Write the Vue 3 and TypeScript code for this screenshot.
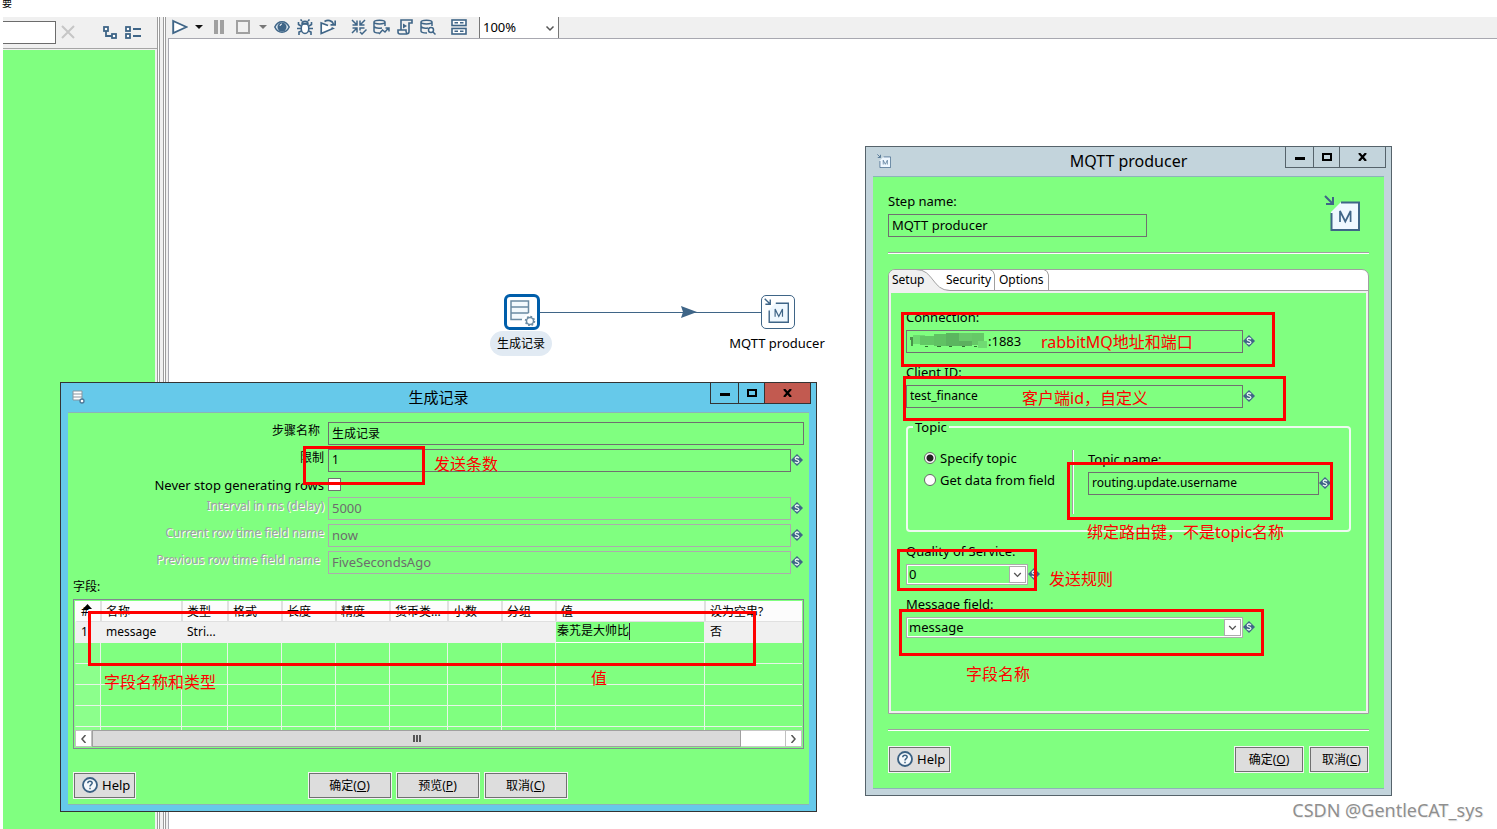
<script setup lang="ts">
import { ref } from 'vue'

interface Mark { x: number; y: number; w: number; h: number }
interface Note { x: number; y: number; text: string }
interface Field { id: string; label: string; value: string; disabled?: boolean; variable?: boolean; inset?: boolean }

const marks: Mark[] = [
  { x: 303, y: 446, w: 122, h: 39 },
  { x: 88, y: 611, w: 668, h: 55 },
  { x: 901, y: 312, w: 374, h: 55 },
  { x: 903, y: 376, w: 383, h: 45 },
  { x: 1067, y: 462, w: 266, h: 58 },
  { x: 897, y: 549, w: 140, h: 42 },
  { x: 899, y: 609, w: 365, h: 47 },
]

const notes: Note[] = [
  { x: 434, y: 454, text: '发送条数' },
  { x: 104, y: 672, text: '字段名称和类型' },
  { x: 591, y: 668, text: '值' },
  { x: 1041, y: 332, text: 'rabbitMQ地址和端口' },
  { x: 1022, y: 388, text: '客户端id，自定义' },
  { x: 1087, y: 522, text: '绑定路由键，不是topic名称' },
  { x: 1049, y: 569, text: '发送规则' },
  { x: 966, y: 664, text: '字段名称' },
]

const topFields: Field[] = [
  { id: 'step', label: '步骤名称', value: '生成记录', inset: true },
  { id: 'limit', label: '限制', value: '1', variable: true },
]
const timeFields: Field[] = [
  { id: 'interval', label: 'Interval in ms (delay)', value: '5000', disabled: true, variable: true },
  { id: 'now', label: 'Current row time field name', value: 'now', disabled: true, variable: true },
  { id: 'prev', label: 'Previous row time field name', value: 'FiveSecondsAgo', disabled: true, variable: true, inset: true },
]

const columns = ['#', '名称', '类型', '格式', '长度', '精度', '货币类...', '小数', '分组', '值', '设为空串?']
const neverStop = ref(false)
const topicMode = ref('topic')
const cellValue = ref('秦艽是大帅比')
</script>

<template>
  <div class="page">
    <svg class="defs" width="0" height="0" aria-hidden="true">
      <symbol id="var" viewBox="0 0 12 12">
        <path d="M6 0L12 6L6 12L0 6Z" fill="#3f6587" />
        <path d="M8 4.200C7.400 3 4.200 2.800 4.200 4.500C4.200 6.200 7.900 5.700 7.900 7.400C7.900 9 4.500 9 3.900 7.800" fill="none" stroke="#dff0ea" stroke-width="1.300" />
        <path d="M6 2V3.500M6 8.500V10" stroke="#dff0ea" />
      </symbol>
      <symbol id="help" viewBox="0 0 16 16">
        <circle cx="8" cy="8" r="7" fill="#f4f8fb" stroke="#3b6183" stroke-width="1.800" />
        <path d="M5.800 6.200C5.800 3.500 10.200 3.500 10.200 6.100C10.200 7.600 8 7.700 8 9.400M8 10.700V12.200" fill="none" stroke="#3b6183" stroke-width="1.500" />
      </symbol>
      <symbol id="chevron" viewBox="0 0 16 16">
        <path d="M4.500 6.500L8 10L11.500 6.500" fill="none" stroke="#555" stroke-width="1.500" />
      </symbol>
      <symbol id="mqtt" viewBox="0 0 36 36">
        <path d="M17 7H35V35H7V17Z" fill="#eff8ff" />
        <path d="M17 7.500H35V35H7.500V18" fill="none" stroke="#3f6587" stroke-width="2" />
        <path d="M1 1L8 8M9 2V9H2" fill="none" stroke="#3f6587" stroke-width="2" />
        <path d="M16 27V16L21.300 26.500L26.600 16V27" fill="none" stroke="#3f6587" stroke-width="1.700" />
      </symbol>
    </svg>

    <div class="top-strip"><span>要</span></div>

    <div class="workspace">
      <aside class="explorer">
        <div class="explorer-bar">
          <input class="search" type="text" aria-label="Search" />
          <button class="tool clear" aria-label="Clear">
            <svg width="14" height="14" viewBox="0 0 14 14"><path d="M1 1L13 13M13 1L1 13" stroke="#c6c6c6" stroke-width="2" /></svg>
          </button>
          <button class="tool" aria-label="Expand all">
            <svg width="14" height="13" viewBox="0 0 14 13" fill="#fff" stroke="#3f6587" stroke-width="1.800"><rect x="1" y="1" width="4" height="4" /><rect x="9" y="8" width="4" height="4" /><path d="M3 5V10H9" fill="none" /></svg>
          </button>
          <button class="tool collapse" aria-label="Collapse all">
            <svg width="17" height="13" viewBox="0 0 17 13" fill="#fff" stroke="#3f6587" stroke-width="1.800"><rect x="1" y="1" width="4" height="4" /><rect x="1" y="8" width="4" height="4" /><path d="M8 3H16M8 10H16" /></svg>
          </button>
        </div>
        <div class="tree"></div>
      </aside>
      <div class="sash"></div>

      <main class="editor">
        <div class="toolbar">
          <button class="tool w23" aria-label="Run">
            <svg width="16" height="16" viewBox="0 0 16 16"><path d="M1.200 2L14.500 8L1.200 14Z" fill="#fff" stroke="#3f6587" stroke-width="1.900" /></svg>
          </button>
          <button class="tool w16" aria-label="Run options"><svg width="8" height="4"><path d="M0 0H8L4 4Z" fill="#111" /></svg></button>
          <button class="tool w24" aria-label="Pause"><svg width="10" height="14"><path d="M0 0H4V14H0ZM6 0H10V14H6Z" fill="#a0a0a0" /></svg></button>
          <button class="tool w24" aria-label="Stop"><svg width="14" height="14"><rect x="1" y="1" width="12" height="12" fill="none" stroke="#a0a0a0" stroke-width="2" /></svg></button>
          <button class="tool w15" aria-label="Stop options"><svg width="8" height="4"><path d="M0 0H8L4 4Z" fill="#777" /></svg></button>
          <button class="tool w23" aria-label="Preview">
            <svg width="16" height="14" viewBox="0 0 16 14"><path d="M.8 7C4 0 12 0 15.200 7C12 14 4 14 .8 7Z" fill="#dce8f0" stroke="#3f6587" stroke-width="1.500" /><circle cx="8" cy="7" r="4.500" fill="#3f6587" /><path d="M6 6A2 2 0 0 1 8 4" fill="none" stroke="#fff" /></svg>
          </button>
          <button class="tool w23" aria-label="Debug">
            <svg width="16" height="16" viewBox="0 0 16 16" fill="none" stroke="#3f6587" stroke-width="1.600"><ellipse cx="8" cy="9.500" rx="3.800" ry="5" fill="#fff" /><path d="M5 5C5 1.500 11 1.500 11 5ZM5 2L3.500 .5M11 2L12.500 .5M4 7L1.500 5.500V3M12 7L14.500 5.500V3M4 9.500H0M12 9.500H16M4.500 12L2 13V16M11.500 12L14 13V16" /></svg>
          </button>
          <button class="tool w23" aria-label="Replay">
            <svg width="16" height="16" viewBox="0 0 16 16" fill="none" stroke="#3f6587" stroke-width="1.700"><path d="M8 6.500L1.200 4V14.500L13 9.500L11.500 8.700" fill="#fff" /><path d="M4.500 2.500C8 .5 12 1.500 13.500 5M15.200 1.500V5.800H10.500" /></svg>
          </button>
          <button class="tool w23 gap" aria-label="Verify">
            <svg width="16" height="16" viewBox="0 0 16 16" fill="none" stroke="#3f6587" stroke-width="1.500"><path d="M1 1L5.500 5.500M6 1.500V6H1.500M14 1L9.500 5.500M9 1.500V6H13.500M1 14L5.500 9.500M6 13.500V9H1.500M13.500 9H9V11.500M9 13L11 15L15.500 10.500" /></svg>
          </button>
          <button class="tool w23" aria-label="Impact">
            <svg width="17" height="16" viewBox="0 0 17 16" fill="none" stroke="#3f6587" stroke-width="1.500"><path d="M1 3C1 .5 12 .5 12 3V7M1 3C1 5.500 12 5.500 12 3M1 3V12C1 13.500 4 14 6 14M1 7.500C2 9 6 9.500 9 9M6 15L9.500 11L12 13L15.500 9M12.500 9H16V12.500" /></svg>
          </button>
          <button class="tool w23" aria-label="SQL">
            <svg width="16" height="16" viewBox="0 0 16 16" fill="none" stroke="#3f6587" stroke-width="1.600"><path d="M4 11V1H15V4H12V12.500C12 15.500 9 15 9 12V11H1V13Q1 15 3 15H10.500" /><path d="M6 4.500L10 7L6 9.500Z" fill="#3f6587" stroke="none" /></svg>
          </button>
          <button class="tool w23" aria-label="Explore database">
            <svg width="16" height="16" viewBox="0 0 16 16" fill="none" stroke="#3f6587" stroke-width="1.500"><path d="M1 3C1 .5 12 .5 12 3V7M1 3C1 5.500 12 5.500 12 3M1 3V12C1 13.500 4 14 7 14M1 7.500C2 9 5 9.500 8 9" /><circle cx="11" cy="11" r="2.500" fill="#fff" /><path d="M13 13L15.500 15.500" /></svg>
          </button>
          <button class="tool w23 gap" aria-label="Show results">
            <svg width="16" height="16" viewBox="0 0 16 16" fill="#fff" stroke="#3f6587" stroke-width="1.600"><rect x="1" y="1" width="14" height="5.500" /><rect x="1" y="9.500" width="14" height="5.500" /><path d="M3.500 3.700H7M9 3.700H12.500M3.500 12.200H7M9 12.200H12.500" /></svg>
          </button>
          <div class="zoom">
            <select aria-label="Zoom"><option>100%</option></select>
            <svg width="16" height="16"><use href="#chevron" /></svg>
          </div>
        </div>

        <div class="canvas">
          <svg class="hop" width="222" height="14" viewBox="0 0 222 14"><path d="M0 7.500H222" stroke="#3f6587" /><path d="M141 1L157 7L141 13L143 7Z" fill="#3f6587" /></svg>
          <div class="node rows-node">
            <svg width="28" height="28" viewBox="0 0 28 28" fill="none" stroke="#6b8ba3" stroke-width="1.500"><path d="M20.500 15V3H3V21.500H14" fill="#f3f9fd" /><path d="M3 9H20.500M3 15H20.500" /><circle cx="22" cy="23" r="3.500" fill="#fff" /><circle cx="22" cy="23" r="4.500" stroke-dasharray="1.800 1.700" /></svg>
          </div>
          <span class="caption selected">生成记录</span>
          <div class="node mqtt-node"><svg width="25" height="25"><use href="#mqtt" /></svg></div>
          <span class="caption">MQTT producer</span>
        </div>
      </main>
    </div>

    <section class="window rows-window" aria-label="生成记录">
      <header class="titlebar">
        <svg class="sysicon" width="14" height="14" viewBox="0 0 14 14"><path d="M1 1H10V10H1Z" fill="#fff" stroke="#8795a0" /><path d="M1 4H10M1 7H10" stroke="#8795a0" /><circle cx="10" cy="11" r="2" fill="#fff" stroke="#4c7696" stroke-width="1.300" /></svg>
        <h2 class="zh-title">生成记录</h2>
        <div class="winbtns">
          <button class="min" aria-label="Minimize"><svg width="10" height="3"><path d="M0 0H10V3H0Z" /></svg></button>
          <button class="max" aria-label="Maximize"><svg width="10" height="8"><path d="M1 1H9V7H1Z" fill="none" stroke="#000" stroke-width="2" /></svg></button>
          <button class="close" aria-label="Close"><svg width="9" height="8"><path d="M1 0L8 8M8 0L1 8" stroke="#000" stroke-width="2.200" /></svg></button>
        </div>
      </header>
      <form class="winbody rows-body" @submit.prevent>
        <div class="form-rows">
          <div v-for="f in topFields" :key="f.id" class="form-row">
            <label :for="f.id" class="zh" :class="{ inset: f.inset }">{{ f.label }}</label>
            <input :id="f.id" class="box zh" type="text" :value="f.value" />
            <svg v-if="f.variable" class="var"><use href="#var" /></svg>
          </div>
          <div class="form-row check-row">
            <label for="never">Never stop generating rows</label>
            <input id="never" v-model="neverStop" type="checkbox" />
          </div>
          <div v-for="f in timeFields" :key="f.id" class="form-row">
            <label :for="f.id" class="off" :class="{ inset: f.inset }">{{ f.label }}</label>
            <input :id="f.id" class="box" type="text" :value="f.value" disabled />
            <svg class="var"><use href="#var" /></svg>
          </div>
        </div>
        <p class="grid-label zh">字段:</p>
        <div class="grid-frame">
          <div class="grid-view">
            <table>
              <colgroup><col v-for="(c, i) in columns" :key="c" :class="'col' + i" /></colgroup>
              <thead>
                <tr>
                  <th v-for="(c, i) in columns" :key="c">{{ c }}<svg v-if="i === 0" class="sort" width="9" height="5"><path d="M0 5L4.500 0L9 5Z" /></svg></th>
                </tr>
              </thead>
              <tbody>
                <tr class="current">
                  <td>1</td><td>message</td><td>Stri...</td>
                  <td v-for="n in 6" :key="n"></td>
                  <td class="editing"><div><input v-model="cellValue" type="text" aria-label="值" /><i></i></div></td>
                  <td>否</td>
                </tr>
                <tr v-for="r in 5" :key="r"><td v-for="c in 11" :key="c"></td></tr>
              </tbody>
            </table>
          </div>
          <div class="scroll">
            <button aria-label="Scroll left"><svg width="7" height="8"><path d="M5.500 0L2 4L5.500 8" fill="none" stroke="#555" stroke-width="1.500" /></svg></button>
            <div class="thumb"><svg width="8" height="7"><path d="M0 0H2V7H0ZM3 0H5V7H3ZM6 0H8V7H6Z" fill="#555" /></svg></div>
            <div class="track"></div>
            <button aria-label="Scroll right"><svg width="7" height="8"><path d="M1.500 0L5 4L1.500 8" fill="none" stroke="#555" stroke-width="1.500" /></svg></button>
          </div>
        </div>
        <footer class="rows-actions">
          <button class="btn help" type="button"><svg width="16" height="16"><use href="#help" /></svg>Help</button>
          <div class="middle">
            <button class="btn zh" type="submit">确定(<u>O</u>)</button>
            <button class="btn zh" type="button">预览(<u>P</u>)</button>
            <button class="btn zh" type="button">取消(<u>C</u>)</button>
          </div>
        </footer>
      </form>
    </section>

    <section class="window mqtt-window" aria-label="MQTT producer">
      <header class="titlebar">
        <svg class="sysicon" width="14" height="14" viewBox="0 0 36 36"><use href="#mqtt" /></svg>
        <h2>MQTT producer</h2>
        <div class="winbtns">
          <button class="min" aria-label="Minimize"><svg width="10" height="3"><path d="M0 0H10V3H0Z" /></svg></button>
          <button class="max" aria-label="Maximize"><svg width="10" height="8"><path d="M1 1H9V7H1Z" fill="none" stroke="#000" stroke-width="2" /></svg></button>
          <button class="close" aria-label="Close"><svg width="9" height="8"><path d="M1 0L8 8M8 0L1 8" stroke="#000" stroke-width="2.200" /></svg></button>
        </div>
      </header>
      <form class="winbody mqtt-body" @submit.prevent>
        <div class="step-head">
          <div class="stack step">
            <label for="mstep">Step name:</label>
            <input id="mstep" class="box" type="text" value="MQTT producer" />
          </div>
          <svg class="step-icon" width="36" height="36"><use href="#mqtt" /></svg>
        </div>
        <hr />
        <div class="tabs">
          <div class="tabbar" role="tablist">
            <svg class="tabshape" width="162" height="22" viewBox="0 0 162 22" fill="none" stroke="#a0a0a0">
              <path d="M0 22V5Q1 .5 6 .5H28C46 .5 44 21.500 62 21.500V22Z" fill="#f0f0f0" stroke="none" />
              <path d="M28 .5C46 .5 44 21.500 62 21.500" />
              <path d="M101 0Q106.500 2 106.500 6V22M155 0Q160.500 2 160.500 6V22" />
            </svg>
            <button class="tab first" type="button" role="tab">Setup</button>
            <button class="tab" type="button" role="tab">Security</button>
            <button class="tab" type="button" role="tab">Options</button>
          </div>
          <div class="tabpage">
            <div class="stack">
              <label for="conn">Connection:</label>
              <div class="var-field">
                <div class="conn">
                  <input id="conn" class="box" type="text" value=":1883" />
                  <svg class="mosaic" width="82" height="18" viewBox="0 0 82 18">
                    <path d="M2 5H6V7H5V14H3V8H2ZM9 4H14V10H12V7H9Z" fill="#49934a" />
                    <rect x="5" y="3" width="12" height="9" fill="#6ddb70" />
                    <rect x="12" y="4" width="14" height="9" fill="#62c865" />
                    <rect x="26" y="2" width="12" height="12" fill="#60c263" />
                    <rect x="38" y="1" width="13" height="13" fill="#5bb55f" />
                    <rect x="51" y="1" width="13" height="8" fill="#69cb6a" />
                    <rect x="51" y="9" width="13" height="5" fill="#5cb15f" />
                    <rect x="64" y="1" width="12" height="12" fill="#66c867" />
                    <rect x="70" y="9" width="9" height="7" fill="#70da72" />
                    <path d="M17 14H20V15H17ZM29 14H33V15H29ZM41 14H44V15H41ZM54 14H57V15H54ZM66 14H69V15H66Z" fill="#307032" />
                  </svg>
                </div>
                <svg class="var"><use href="#var" /></svg>
              </div>
            </div>
            <div class="stack">
              <label for="client">Client ID:</label>
              <div class="var-field">
                <input id="client" class="box small" type="text" value="test_finance" />
                <svg class="var"><use href="#var" /></svg>
              </div>
            </div>
            <fieldset>
              <legend>Topic</legend>
              <div class="topic">
                <div class="radios">
                  <label><input v-model="topicMode" type="radio" name="mode" value="topic" />Specify topic</label>
                  <label><input v-model="topicMode" type="radio" name="mode" value="field" />Get data from field</label>
                </div>
                <div class="divider"></div>
                <div class="stack">
                  <label for="topic">Topic name:</label>
                  <div class="var-field">
                    <input id="topic" class="box small" type="text" value="routing.update.username" />
                    <svg class="var"><use href="#var" /></svg>
                  </div>
                </div>
              </div>
            </fieldset>
            <div class="stack">
              <label for="qos">Quality of Service:</label>
              <div class="var-field short">
                <div class="combo"><select id="qos"><option>0</option></select><span><svg width="16" height="16"><use href="#chevron" /></svg></span></div>
                <svg class="var"><use href="#var" /></svg>
              </div>
            </div>
            <div class="stack">
              <label for="msg">Message field:</label>
              <div class="var-field">
                <div class="combo"><select id="msg"><option>message</option></select><span><svg width="16" height="16"><use href="#chevron" /></svg></span></div>
                <svg class="var"><use href="#var" /></svg>
              </div>
            </div>
          </div>
        </div>
        <hr />
        <footer class="mqtt-actions">
          <button class="btn help" type="button"><svg width="16" height="16"><use href="#help" /></svg>Help</button>
          <button class="btn zh ok" type="submit">确定(<u>O</u>)</button>
          <button class="btn zh cancel" type="button">取消(<u>C</u>)</button>
        </footer>
      </form>
    </section>

    <div v-for="m in marks" :key="m.x + '-' + m.y" class="mark" :style="{ left: m.x + 'px', top: m.y + 'px', width: m.w + 'px', height: m.h + 'px' }"></div>
    <span v-for="n in notes" :key="n.x" class="note" :style="{ left: n.x + 'px', top: n.y + 'px' }">{{ n.text }}</span>
    <span class="watermark">CSDN @GentleCAT_sys</span>
  </div>
</template>

<style>
html, body { margin: 0; overflow: hidden; }
</style>

<style scoped>
.page { position: relative; display: flex; flex-direction: column; min-height: 100vh; background: #fff; overflow: hidden; color: #000; font: 13px/18px "Noto Sans", "Noto Sans CJK SC", sans-serif; }
.page * { box-sizing: border-box; }
.defs { position: absolute; }
svg { display: block; flex: none; }
button, input, select { font: inherit; color: inherit; margin: 0; padding: 0; border: 0; border-radius: 0; background: transparent; appearance: none; outline: 0; }
.zh, .small { font-size: 12px; }

.top-strip { height: 17px; padding-left: 2px; font-size: 10px; line-height: 6px; overflow: hidden; }
.top-strip span { display: block; width: 10px; }
.workspace { flex: 1; display: flex; }
.explorer { width: 157px; display: flex; flex-direction: column; padding-left: 3px; background: linear-gradient(90deg, #fff 3px, #f0f0f0 3px); }
.explorer-bar { height: 32px; display: flex; align-items: center; padding-bottom: 1px; border-bottom: 1px solid #a5a5a5; }
.search { width: 53px; height: 23px; background: #fff; border: 1px solid #6c6c6c; border-left: 0; }
.tool { display: flex; align-items: center; justify-content: center; height: 100%; }
.clear { width: 23px; margin-right: 24px; }
.collapse { margin-left: 8px; }
.tree { flex: 1; margin: 1px 2px 0 0; background: #80ff80; }
.sash { width: 11px; background: linear-gradient(90deg, #9c9c9c 1px, #fff 1px 2px, #9c9c9c 2px 3px, #f0f0f0 3px 6px, #9c9c9c 6px 7px, #fff 7px 8px, #9c9c9c 8px 9px, #f0f0f0 9px); }
.editor { flex: 1; display: flex; flex-direction: column; }
.toolbar { height: 21px; display: flex; align-items: center; background: #f0f0f0; }
.toolbar .tool { padding-bottom: 2px; }
.w23 { width: 23px; }
.w24 { width: 24px; }
.w16 { width: 16px; }
.w15 { width: 15px; }
.gap { margin-left: 8px; }
.zoom { display: grid; width: 80px; height: 21px; margin-left: 9px; background: #fff; border: solid #777; border-width: 0 1px; align-items: center; }
.zoom > * { grid-area: 1 / 1; }
.zoom select { padding: 0 0 2px 3px; }
.zoom svg { justify-self: end; pointer-events: none; }
.canvas { position: relative; flex: 1; background: #fff; border: solid #a8a8b0; border-width: 1px 0 0 1px; }
.hop { position: absolute; left: 371px; top: 266px; }
.node { position: absolute; display: flex; background: #fff; }
.rows-node { left: 335px; top: 255px; width: 36px; height: 36px; border: 3px solid #005eaa; border-radius: 6px; align-items: center; justify-content: center; }
.mqtt-node { left: 592px; top: 256px; width: 34px; height: 34px; padding: 2px; border: 1px solid #3f6587; border-radius: 5px; }
.caption { position: absolute; left: 608px; top: 292px; line-height: 25px; white-space: nowrap; transform: translateX(-50%); }
.caption.selected { left: 352px; padding: 0 7px; border-radius: 13px; background: #e1eaf3; font-size: 12px; }

.window { position: absolute; border: 1px solid #333; }
.rows-window { left: 60px; top: 382px; width: 757px; background: #66c9ea; }
.mqtt-window { left: 865px; top: 146px; width: 527px; background: #c3d4dc; border-color: #56636b; }
.titlebar { display: grid; grid-template-columns: 1fr auto 1fr; height: 29px; padding-bottom: 1px; align-items: center; }
.titlebar h2 { margin: 0; font-size: 16px; font-weight: 400; line-height: 28px; }
.titlebar .zh-title { font-size: 15px; }
.sysicon { margin-left: 11px; }
.winbtns { display: flex; justify-self: end; align-self: start; margin: -1px 5px 0 0; }
.winbtns button { display: flex; align-items: center; justify-content: center; height: 22px; border: 1px solid #333; }
.winbtns button + button { margin-left: -1px; }
.mqtt-window .winbtns button { border-color: #56636b; }
.winbtns .min { width: 29px; padding-top: 3px; }
.max { width: 27px; }
.close { width: 47px; }
.rows-window .close { background: #c25a50; }
.winbody { margin: 0 7px 6px; border: solid #8cb4b8; border-width: 1px 0; background: #80ff80; }

.box { flex: 1; min-width: 0; width: 100%; height: 23px; padding: 0 3px 2px; border: 1px solid #707070; }
.box:disabled { color: #6d6d6d; border-color: #acacac; }
.var { width: 12px; height: 12px; margin-bottom: 2px; }

.rows-body { padding: 9px 5px 5px; }
.form-rows { display: flex; flex-direction: column; gap: 4px; }
.form-row { display: flex; align-items: center; }
.form-row label { width: 255px; align-self: flex-start; padding-right: 4px; text-align: right; white-space: nowrap; }
.form-row .inset { padding-right: 8px; }
.form-row .off { color: #a0a0a0; font-size: 12px; text-shadow: 1px 1px 0 #fff; }
.form-row .var { margin-right: 1px; }
.check-row { height: 17px; }
.check-row input { width: 13px; height: 13px; background: #fff; border: 1px solid #707070; }
.check-row input:checked { box-shadow: inset 0 0 0 3px #fff; background: #222; }
.grid-label { margin: 4px 0 3px; }
.grid-frame { border: 1px solid #828790; padding: 1px; }
.grid-view { height: 129px; overflow: hidden; }
table { width: 100%; table-layout: fixed; border-collapse: separate; border-spacing: 0; font-size: 12px; }
.col0 { width: 25px; }
.col1 { width: 81px; }
.col2 { width: 46px; }
.col3, .col4, .col5, .col7, .col8 { width: 54px; }
.col6 { width: 58px; }
.col9 { width: 149px; }
th { position: relative; height: 21px; padding: 2px 0 0 4px; background: #fcfcfc; border-left: 2px solid #e0e0e0; border-bottom: 1px solid #e0e0e0; font-weight: 400; line-height: 18px; text-align: left; white-space: nowrap; }
th:first-child { border-left-color: #fcfcfc; }
.sort { position: absolute; left: 6px; top: 3px; }
td { height: 21px; padding: 0 0 0 5px; border: solid #e8f5e8; border-width: 0 0 1px 1px; line-height: 20px; white-space: nowrap; }
td:first-child { background: #8cff8c; border-left-color: #8cff8c; }
.current td { background: #f0f0f0; border-color: #f0f0f0; }
.current .editing { background: #80ff80; padding: 0; border-bottom-color: #fff; }
.editing div { display: flex; align-items: center; height: 20px; padding: 0 0 2px 1px; }
.editing input { width: 72px; height: 18px; font-size: 12px; }
.editing i { width: 1px; height: 17px; background: #402040; }
.scroll { display: flex; height: 17px; background: #fff; }
.scroll button { display: flex; align-items: center; justify-content: center; width: 17px; background: #fff; border: 1px solid #c0c0c0; }
.thumb { flex: 649; display: flex; align-items: center; justify-content: center; background: #dadada; border: 1px solid #a0a0a0; }
.track { flex: 44; border: solid #c8c8c8; border-width: 1px 0; }
.btn { height: 27px; background: #ddd; border: 1px solid #f4f4f4; box-shadow: inset 0 0 0 1px #707070; text-align: center; white-space: nowrap; }
.btn.help { display: flex; align-items: center; gap: 4px; width: 63px; padding: 0 0 1px 8px; }
.rows-actions { display: grid; grid-template-columns: 1fr auto 1fr; margin-top: 23px; padding-right: 2px; }
.middle { display: flex; gap: 4px; }
.middle .btn { width: 84px; }

.mqtt-body { padding: 15px; }
.step-head { display: flex; justify-content: space-between; }
.step-icon { margin: 3px 9px 0 0; }
.stack { display: flex; flex-direction: column; gap: 4px; }
.step { width: 259px; }
.step .box { flex: none; }
hr { height: 2px; margin: 15px 0; border: 0; border-top: 1px solid #a0a0a0; background: #fff; }
.tabs { border: 1px solid #a0a0a0; border-radius: 7px 7px 0 0; overflow: hidden; background: #fff; }
.tabbar { position: relative; display: flex; height: 21px; border-bottom: 1px solid #a0a0a0; }
.tabshape { position: absolute; left: -1px; top: -1px; }
.tab { position: relative; width: 53px; padding-left: 4px; font-size: 12px; text-align: left; }
.tab.first { padding-left: 3px; }
.tabpage { display: flex; flex-direction: column; gap: 10px; padding: 15px 15px 73px; border: 2px solid #f0f0f0; background: #80ff80; }
.var-field { display: flex; align-items: center; width: 349px; max-width: 100%; }
.var-field.short { width: 134px; }
.conn { position: relative; display: flex; flex: 1; }
.conn .box { padding-left: 81px; }
.mosaic { position: absolute; left: 2px; top: 2px; }
fieldset { min-width: 0; margin: 0; padding: 0 18px 16px 15px; border: 2px solid #eefaf0; border-radius: 4px; }
legend { margin-left: -10px; padding: 0 2px; }
.topic { display: grid; grid-template-columns: 1fr 2px 243px; column-gap: 14px; padding-top: 14px; }
.radios { display: flex; flex-direction: column; margin-top: -3px; padding-left: 1px; }
.radios label { display: flex; align-items: center; gap: 4px; height: 22px; white-space: nowrap; }
.radios input { width: 12px; height: 12px; border: 1px solid #666; border-radius: 50%; background: #fff; }
.radios input:checked { background: radial-gradient(circle, #222 3px, #fff 4px); }
.divider { height: 64px; background: linear-gradient(90deg, #a0a0a0 1px, #fff 1px); }
.combo { display: grid; flex: 1; height: 21px; border: 1px solid #acacac; padding: 1px; background: #fff; }
.combo > * { grid-area: 1 / 1; }
.combo select { padding-left: 1px; background: #80ff80; width: 100%; height: 17px; line-height: 17px; }
.combo span { justify-self: end; width: 17px; height: 17px; border: 1px solid #acacac; background: #fff; pointer-events: none; }
.combo span svg { width: 15px; height: 15px; }
.mqtt-actions { display: flex; }
.ok { width: 70px; margin-left: auto; }
.cancel { width: 60px; margin-left: 5px; padding-left: 5px; }

.mark { position: absolute; border: 3px solid #f00; pointer-events: none; }
.note { position: absolute; color: #f00; font-size: 16px; line-height: 20px; white-space: nowrap; pointer-events: none; }
.watermark { position: absolute; right: 14px; bottom: 7px; color: #8f8f8f; font-size: 18px; line-height: 24px; text-shadow: 1px 1px 0 #eee; }
</style>
